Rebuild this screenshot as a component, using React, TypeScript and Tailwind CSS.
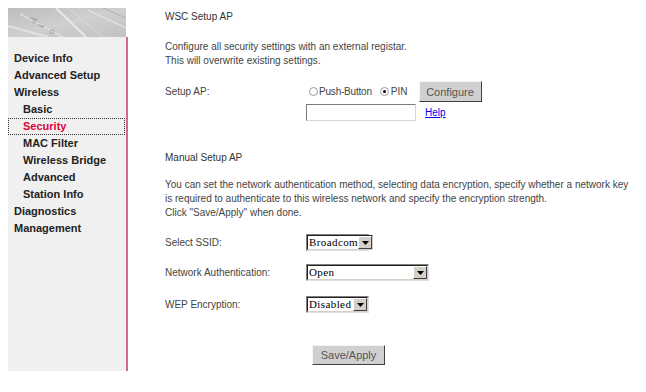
import React from "react";

const Arrow = () => (
  <div className="w-[14px] h-full bg-[#d4d0c8] border-t border-l border-t-white border-l-white border-r border-b border-r-[#404040] border-b-[#404040] flex items-center justify-center">
    <svg width="7" height="4" viewBox="0 0 7 4"><path d="M0 0H7L3.5 4Z" fill="#000" /></svg>
  </div>
);

const FakeSelect = ({ value, width }: { value: string; width: number }) => (
  <div
    className="h-[17px] flex items-stretch bg-white border border-t-[#808080] border-l-[#808080] border-r-[#e0e0e0] border-b-[#e0e0e0]"
    style={{ width }}
  >
    <div className="flex-1 flex items-stretch border border-t-[#202020] border-l-[#202020] border-r-[#d4d0c8] border-b-[#d4d0c8]">
      <div className="flex-1 pl-[1px] text-[11px] leading-[13px] text-black tracking-[0.4px] overflow-hidden whitespace-nowrap" style={{ fontFamily: '"Liberation Serif", "Times New Roman", serif' }}>
        {value}
      </div>
      <Arrow />
    </div>
  </div>
);

const Radio = ({ checked }: { checked?: boolean }) => (
  <span className="inline-flex w-[9px] h-[9px] rounded-full border border-[#9a9a9a] bg-white items-center justify-center">
    {checked && <span className="w-[3px] h-[3px] rounded-full bg-black" />}
  </span>
);

const Btn = ({ children, w, h }: { children: React.ReactNode; w: number; h: number }) => (
  <div
    className="flex items-center justify-center bg-[#d0d0d0] border border-t-[#f4f4f4] border-l-[#f4f4f4] border-r-[#404040] border-b-[#404040] text-[11px] text-[#555]"
    style={{ width: w, height: h }}
  >
    {children}
  </div>
);

export default function App() {
  const menu: { t: string; sub?: boolean; active?: boolean }[] = [
    { t: "Device Info" },
    { t: "Advanced Setup" },
    { t: "Wireless" },
    { t: "Basic", sub: true },
    { t: "Security", sub: true, active: true },
    { t: "MAC Filter", sub: true },
    { t: "Wireless Bridge", sub: true },
    { t: "Advanced", sub: true },
    { t: "Station Info", sub: true },
    { t: "Diagnostics" },
    { t: "Management" },
  ];
  return (
    <div
      className="w-[646px] h-[392px] bg-white flex pl-[8px] pt-[8px] overflow-hidden text-[#444]"
      style={{ fontFamily: '"Liberation Sans", Arial, sans-serif' }}
    >
      {/* Sidebar */}
      <div className="w-[120px] flex flex-col h-[363px]">
        <div className="w-[118px] h-[29px] bg-[#c4c4c4] overflow-hidden">
          <svg width="118" height="29" viewBox="0 0 118 29">
            <defs>
              <linearGradient id="g" x1="0" y1="0" x2="1" y2="1">
                <stop offset="0" stopColor="#bdbdbd" />
                <stop offset="0.5" stopColor="#cfcfcf" />
                <stop offset="1" stopColor="#c2c2c2" />
              </linearGradient>
            </defs>
            <rect width="118" height="29" fill="url(#g)" />
            <path d="M0 18 L40 29" stroke="#e2e2e2" strokeWidth="2" />
            <path d="M12 6 L55 29" stroke="#dcdcdc" strokeWidth="1.5" />
            <path d="M48 0 L78 29" stroke="#e8e8e8" strokeWidth="2" />
            <path d="M60 0 L95 29" stroke="#d8d8d8" strokeWidth="1" />
            <path d="M80 2 L118 20" stroke="#dedede" strokeWidth="1.5" />
            <path d="M95 0 L118 10" stroke="#b0b0b0" strokeWidth="1" />
            <path d="M22 10 L30 12" stroke="#a8a8a8" strokeWidth="1.5" />
            <path d="M30 17 L36 19" stroke="#a8a8a8" strokeWidth="1.5" />
            <circle cx="44" cy="24" r="2" fill="none" stroke="#a8a8a8" />
            <circle cx="26" cy="14" r="1.5" fill="none" stroke="#b0b0b0" />
          </svg>
        </div>
        <div className="flex-1 bg-[#f0f0f0] border-r-2 border-[#d26a86] pt-[13px]">
          {menu.map((m) => (
            <div
              key={m.t}
              className={
                "h-[17px] leading-[15px] text-[11px] font-bold mr-[1px] " +
                (m.sub ? "pl-[14px] " : "pl-[5px] ") +
                (m.active
                  ? "text-[#e0003a] border border-dotted border-[#333]"
                  : "text-[#222] border border-transparent")
              }
            >
              {m.t}
            </div>
          ))}
        </div>
      </div>

      {/* Main */}
      <div className="flex flex-col ml-[37px] text-[10px] leading-[14px]">
        <div className="mt-[2px] text-[#333]">WSC Setup AP</div>
        <div className="mt-[16px]">
          <div>Configure all security settings with an external registar.</div>
          <div>This will overwrite existing settings.</div>
        </div>
        <div className="mt-[13px] flex items-center h-[21px]">
          <div className="w-[141px]">Setup AP:</div>
          <div className="flex items-center gap-[1px] ml-[3px]">
            <Radio />
            <span className="tracking-[-0.2px]">Push-Button</span>
            <span className="w-[6px]" />
            <Radio checked />
            <span className="ml-[1px]">PIN</span>
          </div>
          <div className="ml-[11px]">
            <Btn w={63} h={21}>Configure</Btn>
          </div>
        </div>
        <div className="mt-[2px] flex items-center h-[17px]">
          <div className="w-[141px]" />
          <div className="w-[110px] h-[17px] bg-white border border-t-[#7a7a7a] border-l-[#7a7a7a] border-r-[#d8d8d8] border-b-[#d8d8d8]" />
          <a className="ml-[9px] text-[#0000ee] underline">Help</a>
        </div>
        <div className="mt-[30px] text-[#333]">Manual Setup AP</div>
        <div className="mt-[13px]">
          <div>You can set the network authentication method, selecting data encryption, specify whether a network key</div>
          <div>is required to authenticate to this wireless network and specify the encryption strength.</div>
          <div>Click "Save/Apply" when done.</div>
        </div>
        <div className="mt-[14px] flex items-center h-[17px]">
          <div className="w-[141px]">Select SSID:</div>
          <FakeSelect value="Broadcom" width={63} />
        </div>
        <div className="mt-[13px] flex items-center h-[17px]">
          <div className="w-[141px]">Network Authentication:</div>
          <FakeSelect value="Open" width={123} />
        </div>
        <div className="mt-[15px] flex items-center h-[17px]">
          <div className="w-[141px]">WEP Encryption:</div>
          <FakeSelect value="Disabled" width={63} />
        </div>
        <div className="mt-[32px] flex">
          <div className="w-[147px]" />
          <Btn w={73} h={20}>Save/Apply</Btn>
        </div>
      </div>
    </div>
  );
}
